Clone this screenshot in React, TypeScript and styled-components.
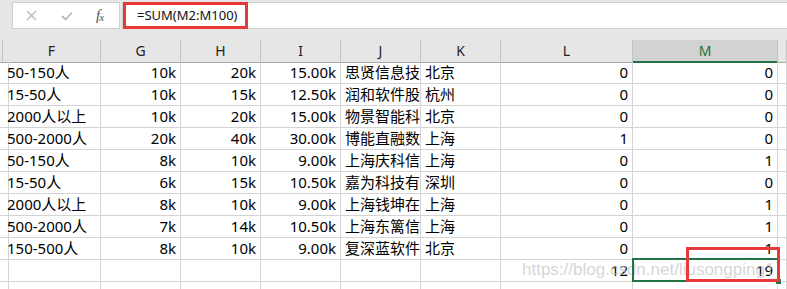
import React from "react"
import styled, { createGlobalStyle } from "styled-components"

const GlobalStyle = createGlobalStyle`
  html, body {
    margin: 0;
    padding: 0;
    background: #ffffff;
  }
`

const COLS = "3px 98px 80px 80px 80px 80px 80px 132px 145px 9px"
const GREEN = "#217346"
const RED = "#e8393a"

const Sheet = styled.div`
  position: relative;
  width: 787px;
  height: 289px;
  overflow: hidden;
  font-family: "Noto Sans", "Noto Sans CJK SC", sans-serif;
  color: #000;
  background: #fff;
`

const FormulaBar = styled.div`
  display: flex;
  align-items: flex-start;
  gap: 2px;
  height: 40px;
  padding-top: 2px;
  box-sizing: border-box;
  background: #e6e6e6;
`

const ToolBox = styled.div`
  display: flex;
  align-items: center;
  margin-left: 12px;
  width: 108px;
  height: 27px;
  box-sizing: border-box;
  background: #fff;
  border: 1px solid #d0d0d0;
`

const ToolIcon = styled.div`
  width: 36px;
  height: 100%;
  display: flex;
  align-items: center;
  justify-content: center;
`

const Fx = styled.span`
  font-family: "Liberation Serif", serif;
  font-style: italic;
  font-size: 15px;
  color: #555;
  padding-left: 11px;
  letter-spacing: -1px;
  sub {
    font-size: 11px;
    vertical-align: -1px;
  }
`

const FormulaInput = styled.div`
  flex: 1;
  height: 27px;
  box-sizing: border-box;
  background: #fff;
  border: 1px solid #d0d0d0;
  border-right: none;
`

const Annotated = styled.span`
  display: inline-block;
  box-sizing: border-box;
  width: 125px;
  height: 27px;
  margin-top: -1px;
  border: 3px solid ${RED};
  padding-left: 11px;
  font-size: 13px;
  line-height: 20px;
  color: #111;
`

const Row = styled.div<{ $head?: boolean }>`
  display: grid;
  grid-template-columns: ${COLS};
  height: 22px;
  background: ${p => (p.$head ? "#e6e6e6" : "#fff")};
`

const HeadCell = styled.div<{ $active?: boolean }>`
  box-sizing: border-box;
  text-align: center;
  font-size: 14px;
  line-height: 21px;
  color: ${p => (p.$active ? GREEN : "#222")};
  background: ${p => (p.$active ? "#d2d2d2" : "transparent")};
  border-right: 1px solid #c4c4c4;
  border-bottom: ${p => (p.$active ? `2px solid ${GREEN}` : "1px solid #a8a8a8")};
`

const Cell = styled.div<{ $align?: "left" | "right" }>`
  box-sizing: border-box;
  padding: 0 4px;
  font-size: 15px;
  line-height: 21px;
  white-space: nowrap;
  overflow: hidden;
  text-align: ${p => p.$align || "left"};
  border-right: 1px solid #d4d4d4;
  border-bottom: 1px solid #d4d4d4;
`

const Selection = styled.div`
  position: absolute;
  left: 632px;
  top: 258px;
  width: 147px;
  height: 24px;
  box-sizing: border-box;
  border: 2px solid ${GREEN};
  pointer-events: none;
`

const FillHandle = styled.div`
  position: absolute;
  left: 775px;
  top: 278px;
  width: 7px;
  height: 7px;
  box-sizing: border-box;
  background: ${GREEN};
  border: 1px solid #fff;
`

const RedMark = styled.div`
  position: absolute;
  left: 686px;
  top: 247px;
  width: 94px;
  height: 35px;
  box-sizing: border-box;
  border: 3px solid ${RED};
`

const Watermark = styled.div`
  position: absolute;
  left: 522px;
  top: 260px;
  font-family: "Liberation Sans", Arial, sans-serif;
  font-size: 17px;
  line-height: 20px;
  color: rgba(195, 195, 195, 0.7);
  white-space: nowrap;
  pointer-events: none;
`

const letters = ["F", "G", "H", "I", "J", "K", "L", "M"]

// company names are shown only as far as the J column lets them
const rows = [
  ["50-150人", "10k", "20k", "15.00k", "思贤信息技", "北京", "0", "0"],
  ["15-50人", "10k", "15k", "12.50k", "润和软件股", "杭州", "0", "0"],
  ["2000人以上", "10k", "20k", "15.00k", "物景智能科", "北京", "0", "0"],
  ["500-2000人", "20k", "40k", "30.00k", "博能直融数", "上海", "1", "0"],
  ["50-150人", "8k", "10k", "9.00k", "上海庆科信", "上海", "0", "1"],
  ["15-50人", "6k", "15k", "10.50k", "嘉为科技有", "深圳", "0", "0"],
  ["2000人以上", "8k", "10k", "9.00k", "上海钱坤在", "上海", "0", "1"],
  ["500-2000人", "7k", "14k", "10.50k", "上海东篱信", "上海", "0", "1"],
  ["150-500人", "8k", "10k", "9.00k", "复深蓝软件", "北京", "0", "1"],
  ["", "", "", "", "", "", "12", "19"],
  ["", "", "", "", "", "", "", ""],
]

const rightCols = [1, 2, 3, 6, 7]

const CrossIcon = () => (
  <svg width="11" height="11" viewBox="0 0 11 11">
    <path d="M1 1 L10 10 M10 1 L1 10" stroke="#b9b9b9" strokeWidth="1.4" fill="none" />
  </svg>
)

const CheckIcon = () => (
  <svg width="12" height="10" viewBox="0 0 12 10">
    <path d="M1 5 L4.5 8.5 L11 1.5" stroke="#b9b9b9" strokeWidth="1.8" fill="none" />
  </svg>
)

export default function App() {
  return (
    <Sheet>
      <GlobalStyle />
      <FormulaBar>
        <ToolBox>
          <ToolIcon><CrossIcon /></ToolIcon>
          <ToolIcon><CheckIcon /></ToolIcon>
          <Fx>f<sub>x</sub></Fx>
        </ToolBox>
        <FormulaInput>
          <Annotated>=SUM(M2:M100)</Annotated>
        </FormulaInput>
      </FormulaBar>

      <Row $head>
        <HeadCell />
        {letters.map(l => (
          <HeadCell key={l} $active={l === "M"}>{l}</HeadCell>
        ))}
        <HeadCell />
      </Row>

      {rows.map((r, i) => (
        <Row key={i}>
          <Cell />
          {r.map((v, j) => (
            <Cell key={j} $align={rightCols.includes(j) ? "right" : "left"}>{v}</Cell>
          ))}
          <Cell />
        </Row>
      ))}

      <Watermark>https://blog.csdn.net/liusongping1</Watermark>
      <Selection />
      <FillHandle />
      <RedMark />
    </Sheet>
  )
}
